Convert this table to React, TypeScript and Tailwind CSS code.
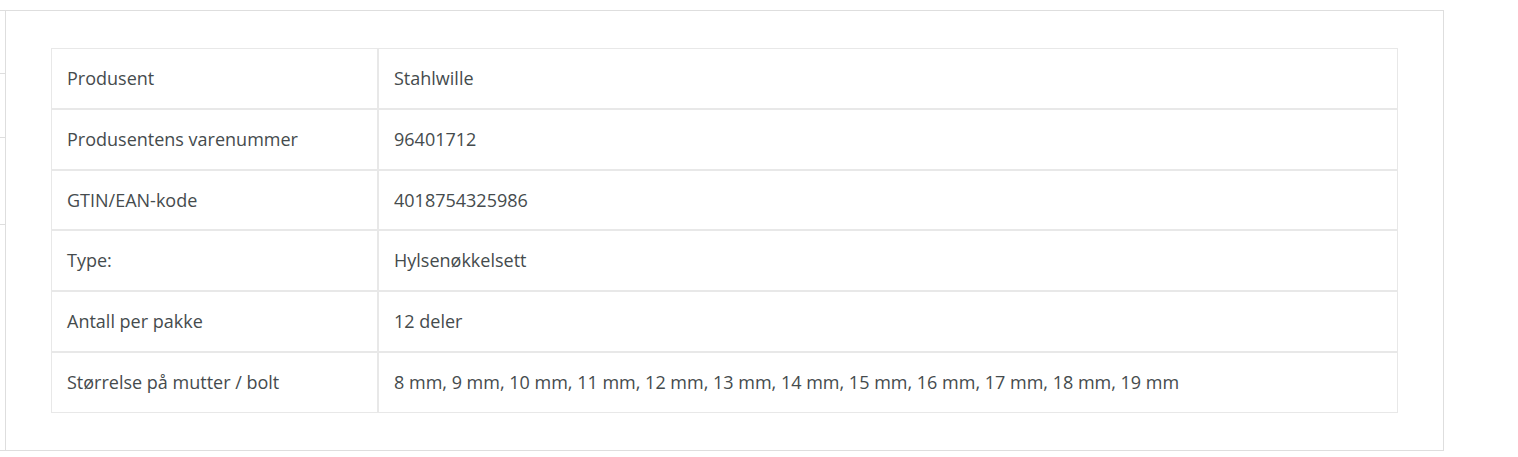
import React from "react";

const rows: [string, string, string][] = [
  ["Produsent", "Stahlwille", "h-[61px]"],
  ["Produsentens varenummer", "96401712", "h-[61px]"],
  ["GTIN/EAN-kode", "4018754325986", "h-[60px]"],
  ["Type:", "Hylsenøkkelsett", "h-[61px]"],
  ["Antall per pakke", "12 deler", "h-[61px]"],
  [
    "Størrelse på mutter / bolt",
    "8 mm, 9 mm, 10 mm, 11 mm, 12 mm, 13 mm, 14 mm, 15 mm, 16 mm, 17 mm, 18 mm, 19 mm",
    "h-[61px]",
  ],
];

export default function App() {
  return (
    <div
      className="bg-white pt-[10px] w-[1518px] h-[457px]"
      style={{ fontFamily: '"Open Sans", "Noto Sans", sans-serif' }}
    >
      <div className="flex w-[1444px] border-t border-b border-[#dedede]">
        <div className="w-[5px] shrink-0">
          <div className="h-[63px] border-b border-[#dedede]" />
          <div className="h-[64px] border-b border-[#dedede]" />
          <div className="h-[87px] border-b border-[#dedede]" />
        </div>
        <div className="flex-1 border-l border-r border-[#dedede] pl-[45px] pr-[45px] pt-[37px] pb-[37px]">
          <div className="grid grid-cols-[327px_1fr] text-[18px] text-[#454b4d]">
            {rows.map(([k, v, h]) => (
              <React.Fragment key={k}>
                <div className={`${h} border border-[#e8e8e8] px-[15px] flex items-center`}>
                  {k}
                </div>
                <div className={`${h} border border-[#e8e8e8] px-[15px] flex items-center`}>
                  {v}
                </div>
              </React.Fragment>
            ))}
          </div>
        </div>
      </div>
    </div>
  );
}
